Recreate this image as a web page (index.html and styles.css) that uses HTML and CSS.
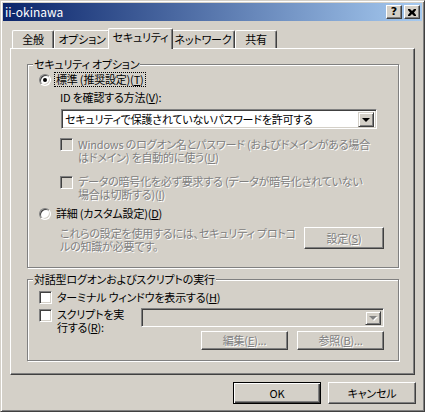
FILE: index.html
```html
<!DOCTYPE html>
<html lang="ja">
<head>
<meta charset="utf-8">
<title>ii-okinawa</title>
<link rel="stylesheet" href="styles.css">
</head>
<body>
<div class="window">
  <div class="titlebar">
    <span class="title">ii-okinawa</span>
    <div class="tbtns">
      <span class="tbtn help">?</span>
      <span class="tbtn close"><svg width="8" height="7" viewBox="0 0 8 7"><path d="M0 0h2l2 2 2-2h2v1L6 3.5 8 6v1H6L4 5 2 7H0V6l2-2.5L0 1z" fill="#000"/></svg></span>
    </div>
  </div>
  <div class="content">
    <div class="tabs">
      <div class="tab w1">全般</div>
      <div class="tab w2">オプション</div>
      <div class="tab sel">セキュリティ</div>
      <div class="tab w4">ネットワーク</div>
      <div class="tab w5">共有</div>
    </div>
    <div class="panel">
      <div class="group g1">
        <div class="gtitle">セキュリティ オプション</div>
        <div class="row radio-row first">
          <span class="radio on"></span>
          <span class="focus">標準 (推奨設定)(<u>T</u>)</span>
        </div>
        <div class="idlabel">ID を確認する方法(<u>V</u>):</div>
        <div class="combo main">
          <span class="ctext">セキュリティで保護されていないパスワードを許可する</span>
          <span class="dbtn"><span class="arrow"></span></span>
        </div>
        <div class="row cb-row cb1">
          <span class="cb disabled"></span>
          <span class="dtext">Windows のログオン名とパスワード (およびドメインがある場合<br>はドメイン) を自動的に使う(<u>U</u>)</span>
        </div>
        <div class="row cb-row cb2">
          <span class="cb disabled"></span>
          <span class="dtext">データの暗号化を必ず要求する (データが暗号化されていない<br>場合は切断する)(<u>I</u>)</span>
        </div>
        <div class="row radio-row second">
          <span class="radio"></span>
          <span class="rtext">詳細 (カスタム設定)(<u>D</u>)</span>
        </div>
        <div class="row desc-row">
          <span class="dtext desc">これらの設定を使用するには、セキュリティ プロトコ<br>ルの知識が必要です。</span>
          <span class="btn settings"><span class="dtext">設定(<u>S</u>)</span></span>
        </div>
      </div>
      <div class="group g2">
        <div class="gtitle">対話型ログオンおよびスクリプトの実行</div>
        <div class="row cb-row term">
          <span class="cb"></span>
          <span class="ltext">ターミナル ウィンドウを表示する(<u>H</u>)</span>
        </div>
        <div class="row script-row">
          <div class="script-label">
            <span class="cb"></span>
            <span class="ltext">スクリプトを実<br>行する(<u>R</u>):</span>
          </div>
          <div class="script-right">
            <div class="combo off">
              <span class="ctext"></span>
              <span class="dbtn"><span class="arrow grey"></span></span>
            </div>
            <div class="btnrow">
              <span class="btn small"><span class="dtext">編集(<u>E</u>)...</span></span>
              <span class="btn small"><span class="dtext">参照(<u>B</u>)...</span></span>
            </div>
          </div>
        </div>
      </div>
    </div>
    <div class="footer">
      <span class="btn big default">OK</span>
      <span class="btn big">キャンセル</span>
    </div>
  </div>
</div>
</body>
</html>
```

FILE: styles.css
```css
html, body {
  margin: 0;
  padding: 0;
  background: #d4d0c8;
}

body {
  font-family: "Noto Sans CJK JP", "Noto Sans", sans-serif;
  font-size: 11px;
  line-height: 13px;
  color: #000;
  font-feature-settings: "palt";
  white-space: nowrap;
  letter-spacing: -0.2px;
}

u {
  text-decoration: underline;
  text-underline-offset: 1px;
}

.window {
  width: 425px;
  height: 412px;
  box-sizing: border-box;
  background: #d4d0c8;
  border: 1px solid;
  border-color: #d4d0c8 #404040 #404040 #d4d0c8;
  box-shadow: inset 1px 1px #fff, inset -1px -1px #808080;
  padding: 2px;
  display: flex;
  flex-direction: column;
  overflow: hidden;
}

/* Title bar */
.titlebar {
  height: 18px;
  flex: none;
  background: linear-gradient(to right, #0a246a, #a6caf0);
  display: flex;
  align-items: center;
  justify-content: space-between;
  padding: 0 2px 0 2px;
}

.title {
  color: #fff;
  font-size: 12px;
  line-height: 18px;
  letter-spacing: 0;
}

.tbtns {
  display: flex;
  gap: 2px;
}

.tbtn {
  width: 16px;
  height: 14px;
  box-sizing: border-box;
  background: #d4d0c8;
  border: 1px solid;
  border-color: #fff #404040 #404040 #fff;
  box-shadow: inset -1px -1px #808080;
  display: flex;
  align-items: center;
  justify-content: center;
  font-family: "DejaVu Sans", sans-serif;
  font-weight: bold;
  font-size: 11px;
  line-height: 12px;
  letter-spacing: 0;
}

.tbtn.close svg {
  display: block;
}

/* Content */
.content {
  padding: 7px 6px 0 7px;
  flex: 1;
  display: flex;
  flex-direction: column;
}

.tabs {
  display: flex;
  align-items: flex-end;
  height: 20px;
  padding-left: 2px;
  flex: none;
}

.tab {
  height: 18px;
  box-sizing: border-box;
  border-top: 1px solid #fff;
  border-left: 1px solid #fff;
  border-right: 1px solid #404040;
  border-top-left-radius: 2px;
  border-top-right-radius: 2px;
  box-shadow: inset -1px 0 #808080;
  text-align: center;
  line-height: 17px;
  background: #d4d0c8;
  flex: none;
}

.tab.w1 { width: 42px; }
.tab.w2 { width: 56px; }
.tab.w4 { width: 64px; }
.tab.w5 { width: 42px; }

.tab.sel {
  width: 65px;
  height: 21px;
  margin: 0 -2px -1px;
  position: relative;
  z-index: 2;
  line-height: 16px;
}

.panel {
  width: 405px;
  height: 327px;
  flex: none;
  box-sizing: border-box;
  border: 1px solid;
  border-color: #fff #404040 #404040 #fff;
  box-shadow: inset -1px -1px #808080;
  padding: 15px 15px 0 16px;
  position: relative;
  z-index: 1;
}

/* Group boxes */
.group {
  border: 1px solid #808080;
  box-shadow: inset 1px 1px #fff, 1px 1px #fff;
  display: flex;
  flex-direction: column;
  padding-left: 11px;
  padding-right: 14px;
}

.gtitle {
  align-self: flex-start;
  height: 13px;
  margin: -7px 0 -6px -6px;
  padding: 0 1px;
  background: #d4d0c8;
  line-height: 13px;
}

.g1 {
  padding-bottom: 14px;
}

.g2 {
  margin-top: 11px;
  padding-bottom: 10px;
}

.row {
  display: flex;
  align-items: flex-start;
}

.radio-row {
  height: 13px;
  align-items: center;
}

.radio-row.first { margin-top: 8px; }
.radio-row.second { margin-top: 6px; }

.radio {
  width: 12px;
  height: 12px;
  box-sizing: border-box;
  border-radius: 50%;
  background: #fff;
  border: 1px solid;
  border-color: #808080 #fff #fff #808080;
  box-shadow: inset 1px 1px #404040, inset -1px -1px #d4d0c8;
  display: flex;
  align-items: center;
  justify-content: center;
  flex: none;
}

.radio.on::after {
  content: "";
  width: 4px;
  height: 4px;
  border-radius: 50%;
  background: #000;
}

.focus {
  margin-left: 4px;
  padding: 0 1px;
  outline: 1px dotted #000;
  outline-offset: 0;
  line-height: 13px;
}

.rtext {
  margin-left: 5px;
}

.idlabel {
  margin: 5px 0 0 21px;
  height: 13px;
}

.combo {
  display: flex;
  align-items: center;
  justify-content: space-between;
  height: 20px;
  box-sizing: border-box;
  border: 1px solid;
  border-color: #808080 #fff #fff #808080;
  box-shadow: inset 1px 1px #404040, inset -1px -1px #d4d0c8;
  padding: 2px;
  background: #fff;
}

.combo.main {
  margin: 5px 7px 0 22px;
}

.combo.off {
  background: #d4d0c8;
  height: 19px;
}

.ctext {
  padding-left: 1px;
  line-height: 14px;
}

.dbtn {
  width: 16px;
  height: 15px;
  box-sizing: border-box;
  background: #d4d0c8;
  border: 1px solid;
  border-color: #d4d0c8 #404040 #404040 #d4d0c8;
  box-shadow: inset 1px 1px #fff, inset -1px -1px #808080;
  display: flex;
  align-items: center;
  justify-content: center;
  flex: none;
}

.combo.off .dbtn {
  height: 14px;
}

.arrow {
  width: 0;
  height: 0;
  border-left: 4px solid transparent;
  border-right: 4px solid transparent;
  border-top: 4px solid #000;
  margin-top: 1px;
}

.arrow.grey {
  border-top-color: #808080;
  filter: drop-shadow(1px 1px 0 #fff);
}

.cb {
  width: 13px;
  height: 13px;
  box-sizing: border-box;
  background: #fff;
  border: 1px solid;
  border-color: #808080 #fff #fff #808080;
  box-shadow: inset 1px 1px #404040, inset -1px -1px #d4d0c8;
  flex: none;
}

.cb.disabled {
  background: #d4d0c8;
}

.cb-row {
  line-height: 13px;
}

.cb1 {
  margin: 9px 0 0 21px;
}

.cb2 {
  margin: 11px 0 0 21px;
}

.cb2 .cb {
  margin-top: 1px;
}

.cb-row .dtext {
  margin-left: 5px;
}

.dtext {
  color: #808080;
  text-shadow: 1px 1px 0 #fff;
}

.desc-row {
  margin: 7px 0 0 21px;
  justify-content: space-between;
  line-height: 13px;
}

.btn {
  display: flex;
  align-items: center;
  justify-content: center;
  box-sizing: border-box;
  background: #d4d0c8;
  border: 1px solid;
  border-color: #fff #404040 #404040 #fff;
  box-shadow: inset -1px -1px #808080;
  flex: none;
}

.btn.settings {
  width: 80px;
  height: 22px;
}

.term {
  margin-top: 11px;
  height: 13px;
  align-items: center;
}

.term .ltext {
  margin-left: 5px;
}

.script-row {
  margin-top: 4px;
}

.script-label {
  display: flex;
  align-items: flex-start;
  width: 102px;
  flex: none;
  line-height: 13px;
}

.script-label .cb {
  margin-top: 1px;
}

.script-label .ltext {
  margin-left: 5px;
}

.script-right {
  flex: 1;
  display: flex;
  flex-direction: column;
}

.btnrow {
  display: flex;
  justify-content: flex-end;
  gap: 9px;
  margin-top: 4px;
}

.btn.small {
  width: 87px;
  height: 19px;
}

.footer {
  display: flex;
  justify-content: flex-end;
  gap: 7px;
  margin-top: 7px;
  flex: none;
}

.btn.big {
  width: 88px;
  height: 22px;
}

.btn.default {
  border: 1px solid #000;
  box-shadow: inset 1px 1px #fff, inset -1px -1px #404040, inset -2px -2px #808080;
}
```
